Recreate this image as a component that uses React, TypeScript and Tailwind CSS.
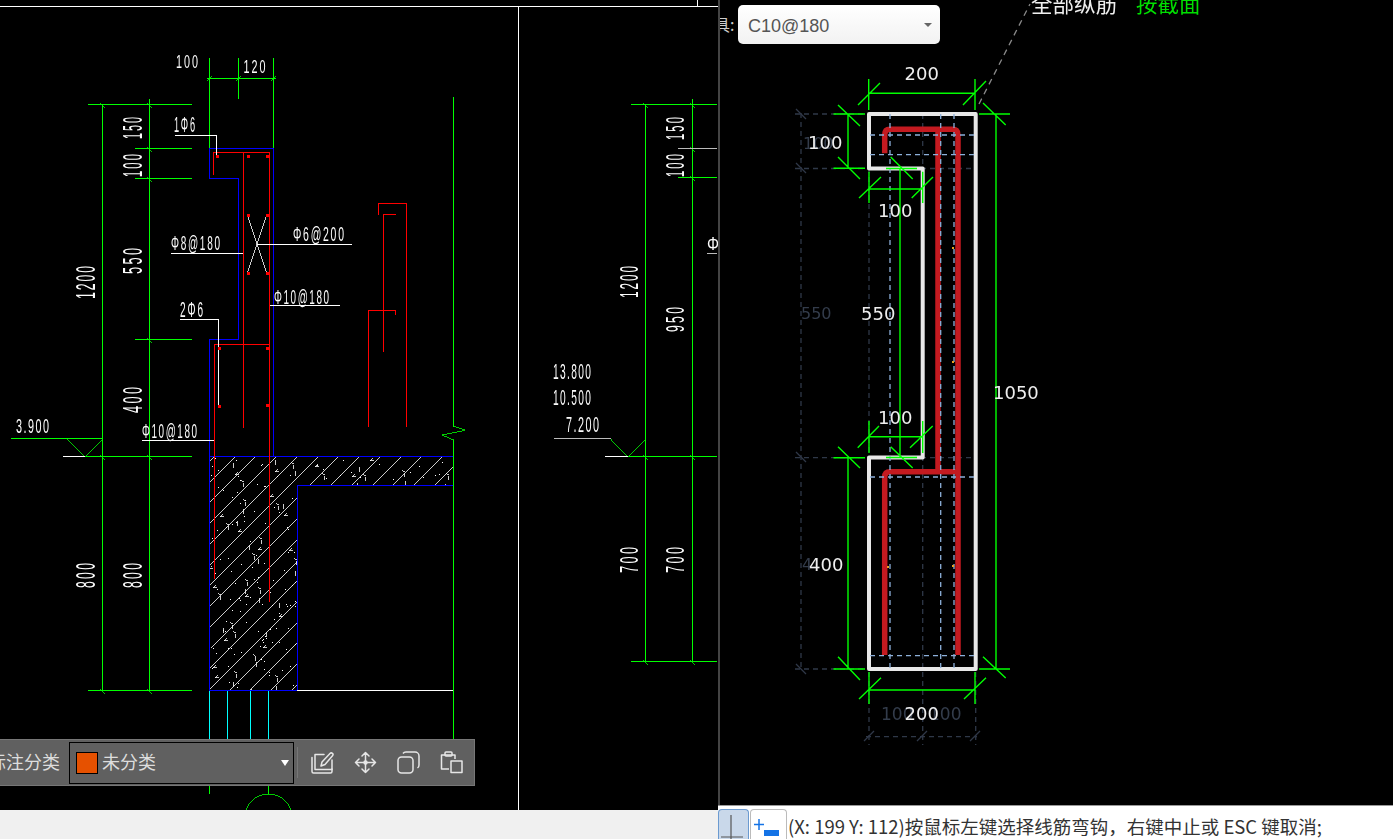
import React from "react";

type Pt = [number, number];
const G = "#00ff00";
const B = "#0000ff";
const R = "#ff0000";
const W = "#ffffff";
const C = "#00ffff";

function P({ d, c, w = 1 }: { d: string; c: string; w?: number }) {
  return <path d={d} stroke={c} strokeWidth={w} fill="none" />;
}

const adv: Record<string, number> = { "@": 1.015, "Φ": 0.76, ".": 0.278 };

function T({ x, y, w, h, r, children, fill = "#ffffff" }: { x: number; y: number; w: number; h: number; r?: boolean; children: string; fill?: string }) {
  const f = h / 0.7;
  const natural = children.split("").reduce((s, ch) => s + (adv[ch] ?? 0.556), 0) * f;
  const sx = (w / natural) * 0.82;
  return (
    <text
      x={0}
      y={0}
      fill={fill}
      opacity={0.99}
      fontFamily="'Liberation Sans', sans-serif"
      fontSize={f}
      textLength={w / sx}
      lengthAdjust="spacing"
      transform={`translate(${x} ${y}) ${r ? "rotate(-90) " : ""}scale(${sx} 1)`}
    >
      {children}
    </text>
  );
}

const hatchLines: number[] = [];
for (let k = -1; k < 15; k++) hatchLines.push(691.67 + k * 20.73);

const tickZ: Pt[] = [
  [130, 95], [140, 122], [150, 150], [255, 88], [262, 113], [300, 95], [315, 120], [380, 98], [392, 128], [508, 108], [492, 128], [515, 132], [500, 155], [545, 82], [632, 120], [645, 150], [680, 162], [765, 128], [765, 158], [245, 190], [255, 220], [278, 218], [287, 245], [155, 207], [160, 235], [97, 248], [105, 280], [140, 270], [150, 295], [205, 320], [178, 342], [210, 348], [183, 368], [205, 385], [304, 350], [310, 385], [315, 420], [62, 405], [162, 447], [165, 475], [172, 490], [202, 470], [208, 500], [75, 462], [82, 488], [266, 517], [272, 550], [118, 575], [100, 592], [108, 620], [125, 603], [228, 604], [225, 642], [187, 672], [197, 693], [80, 732], [128, 722], [130, 752], [182, 773], [252, 735], [258, 765], [75, 703],
];

const dots: Pt[] = [];
let seed = 12345;
for (let i = 0; i < 420 && dots.length < 130; i++) {
  seed = (seed * 1103515 + 12345) % 2147483647;
  const a = 211 + (seed % 241);
  seed = (seed * 1103515 + 12345) % 2147483647;
  const b = 458 + (seed % 231);
  if (b < 484 || a < 296) dots.push([a, b]);
}

const greenTicks: Pt[] = [
  [102.5, 104.5], [149.5, 104.5], [149.5, 148.5], [149.5, 178.5], [149.5, 339.5], [102.5, 456.5], [149.5, 456.5], [102.5, 690.5], [149.5, 690.5],
  [645.5, 104.5], [692.5, 104.5], [692.5, 148.5], [692.5, 177.5], [645.5, 456.5], [692.5, 456.5], [645.5, 661.5], [692.5, 661.5],
];
const redDots: Pt[] = [[217, 156], [247.5, 156], [266.5, 156], [218.5, 348], [266.5, 348], [218.5, 406], [266.5, 405], [247.5, 215], [266.5, 215], [247.5, 273], [266.5, 273]];

function LeftDrawing() {
  return (
    <svg width={718} height={810} viewBox="0 0 718 810" shapeRendering="crispEdges" className="block">
      <defs>
        <clipPath id="conc">
          <path d="M210 457H453V485H297V690H210Z" />
        </clipPath>
      </defs>
      <P d="M0 6.5H718M518.5 6V810M697.5 0V6" c={W} />
      <g clipPath="url(#conc)">
        {hatchLines.map((s) => (
          <line key={s} x1={s - 456} y1={456} x2={s - 700} y2={700} stroke={W} strokeWidth={0.8} />
        ))}
        {tickZ.map(([a, b], i) => {
          const x = Math.round(190 + a / 3) + 0.5;
          const y = Math.round(430 + b / 3) + 0.5;
          const d = i % 3 === 0 ? `M${x} ${y}v5` : i % 3 === 1 ? `M${x} ${y}l-3 3h4` : `M${x} ${y}l3 2v4`;
          return <P key={i} d={d} c={W} w={0.8} />;
        })}
        {dots.map(([a, b], i) => (
          <rect key={i} x={a} y={b} width={1} height={1} fill={W} />
        ))}
      </g>
      <P d="M209.5 58V148M238.5 58V99M273.5 58V148M207 78.5H276" c={G} />
      <P d="M207 81l5-5M236 81l5-5M271 81l5-5" c={G} w={0.8} />
      <P d="M88 104.5H192M102.5 104V690M149.5 99V690M135 148.5H192M135 178.5H192M135 339.5H192M85 456.5H192M88 690.5H192" c={G} />
      <P d="M11 438.5H102" c={G} />
      <P d="M67 438.5L85 456.5L102 438.5" c={G} w={0.8} />
      <P d="M63 456.5H85" c={W} />
      <P d="M453.5 97V426.5M453.5 440V739" c={G} />
      <P d="M453.5 426.5L465 430.5L442 435L453.5 440" c={G} w={0.8} />
      {greenTicks.map(([x, y]) => (
        <P key={`${x}-${y}`} d={`M${x - 2} ${y - 2}l5 5`} c={G} w={0.8} />
      ))}

      <P d="M273.5 148.5H209.5V178.5H238.5V339.5H209.5V690.5" c={B} />
      <P d="M273.5 148.5V456" c={B} />
      <P d="M209.5 456.5H453M209.5 690.5H297.5" c={B} />
      <P d="M297.5 690V485.5H453" c={B} />
      <P d="M297 690.5H453" c={W} />
      <P d="M209.5 691V739M227.5 691V739M250.5 691V739M268.5 691V739" c={C} />
      <P d="M209.5 786V794M268.5 786V794" c={G} />
      <circle cx={268.5} cy={818} r={24} stroke={G} strokeWidth={0.8} fill="none" />

      <P d="M213.5 175V152.5H269.5V602M243.5 152.5V428M214.5 579V344.5H269.5" c={R} />
      <P d="M378.5 215V203.5H406.5V427M383.5 352V214.5H396M368.5 427V310.5H395.5V315" c={R} />

      <P d="M175 135.5H216.5V156M180 319.5H218.5V406M171 253.5H243M257 244.5H352M270 305.5H340M142 440.5H214" c={W} />
      <P d="M247.5 215L266.5 273M266.5 215L247.5 273" c={W} w={0.8} />
      {redDots.map(([x, y]) => (
        <rect key={`${x}-${y}`} x={x - 1} y={y - 1} width={3} height={3} fill={R} />
      ))}

      <T x={176} y={68} w={22} h={12.5}>100</T>
      <T x={243.5} y={73} w={22} h={12.5}>120</T>
      <T x={174} y={132} w={21} h={15}>1Φ6</T>
      <T x={171} y={250} w={49} h={14}>Φ8@180</T>
      <T x={293} y={241} w={51} h={14}>Φ6@200</T>
      <T x={274} y={304} w={55} h={14}>Φ10@180</T>
      <T x={180} y={317} w={23} h={15}>2Φ6</T>
      <T x={142} y={438} w={55} h={14}>Φ10@180</T>
      <T x={16} y={433} w={33} h={14}>3.900</T>
      <T x={142} y={139} w={22} h={19} r>150</T>
      <T x={142} y={177} w={23} h={19} r>100</T>
      <T x={142} y={274} w={26} h={19} r>550</T>
      <T x={142} y={413} w={26} h={19} r>400</T>
      <T x={95} y={299} w={33} h={19} r>1200</T>
      <T x={95} y={588} w={25} h={19} r>800</T>
      <T x={142} y={588} w={25} h={19} r>800</T>

      <P d="M631 104.5H717M678 177.5H717M628 456.5H717M631 661.5H717M645.5 104V661M692.5 99V661" c={G} />
      <P d="M554 438.5H611M678 148.5H717M707 253.5H717" c="#bbbbbb" />
      <P d="M611 438.5L628 456L645 438.5" c={G} w={0.8} />
      <P d="M605 456.5H628" c={W} />
      <T x={684} y={140} w={23} h={18} r>150</T>
      <T x={684} y={177} w={23} h={18} r>100</T>
      <T x={684} y={332} w={25} h={18} r>950</T>
      <T x={638} y={298} w={32} h={18} r>1200</T>
      <T x={638} y={573} w={26} h={18} r>700</T>
      <T x={684} y={573} w={26} h={18} r>700</T>
      <T x={553} y={379} w={38} h={15}>13.800</T>
      <T x={553} y={405} w={38} h={15}>10.500</T>
      <T x={566} y={432} w={33} h={15}>7.200</T>
      <T x={707} y={250} w={14} h={13}>Φ</T>
    </svg>
  );
}

const dim = "#2f3848";
const blue = "#8db0da";

function D({ d, c }: { d: string; c: string }) {
  return <path d={d} stroke={c} strokeWidth={1.3} fill="none" strokeDasharray={c === dim || c === blue ? "5 4" : undefined} />;
}

function Num({ x, y, c = "#eeeeee", s = 18, children }: { x: number; y: number; c?: string; s?: number; children: string }) {
  return (
    <text x={x} y={y} fill={c} fontFamily="'DejaVu Sans', sans-serif" fontSize={s}>
      {children}
    </text>
  );
}

function RightDrawing() {
  return (
    <svg width={673} height={805} viewBox="720 0 673 805" className="block blur-[0.4px]">
      <Num x={881} y={720} c="#333c4b" s={17}>100</Num>
      <Num x={929} y={720} c="#333c4b" s={17}>100</Num>
      <Num x={801} y={319} c="#333c4b" s={16}>550</Num>
      <Num x={803} y={149} c="#333c4b" s={16}>100</Num>
      <Num x={802} y={570} c="#333c4b" s={16}>4</Num>

      <D c={dim} d="M801 113V669M795 114H865M795 168.5H975M795 457.7H975M795 669H865M869 168V457M869 672V745M922.7 114V745M975.7 672V745M866 736.7H977" />
      <path d="M796 109l10 10M796 163l10 10M796 452l10 10M796 664l10 10M864 741l10-10M917 741l10-10M970 741l10-10" stroke={dim} strokeWidth={1.3} />

      <path d="M869 114H975.7V669H869V457.4H922.7V168.4H869Z" fill="none" stroke="#e8e8e8" strokeWidth={4} strokeLinejoin="round" />

      <path d="M884.7 153.3V135Q884.7 129.3 890 129.3H952Q958 129.3 958 135V655" fill="none" stroke="#c41a20" strokeWidth={5.5} />
      <path d="M958 471.7H890Q884.7 471.7 884.7 477V655M938 129.3V471.7" fill="none" stroke="#c41a20" strokeWidth={5.5} />

      <D c={blue} d="M890 114V669M940.7 114V669M954 114V669M870 135H975M870 154.7H975M870 477H975M870 655.7H975" />

      <g stroke={G} strokeWidth={1.4} fill="none">
        <path d="M869 93.3H975M868.7 79V110M975 79V110M858 105L880 83M963 105L986 81" />
        <path d="M833.5 114H865M833.5 168.3H865M848 114V168M838 105L860 126M838 157L860 179" />
        <path d="M979 114H1010M996 114V669M983 103L1005.7 125M983 656.7L1005.7 678M979 669H1010" />
        <path d="M869 189H922.7M869 171.7V203M922.7 171.7V203M859 198L881 177M911.7 198L933 177" />
        <path d="M900 168V457M886 168.5H917M890.7 157L912.7 179M886 457.5H917M890.7 446.7L912.7 468" />
        <path d="M869 436.7H922.7M869 421V453M922.7 421V453M857.7 447.7L879 426M910 447.7L932.7 426" />
        <path d="M848 457.7V669M833.5 457.7H865M833.5 669H865M838 446.7L860 468M838 656.7L860 680" />
        <path d="M869 690H975M869 672V704M975 672V704M859 699L881 677.7M964 699L986 677.7" />
      </g>

      {[[888, 567], [953, 566], [953, 248], [953, 362]].map(([x, y]) => (
        <rect key={`${x}-${y}`} x={x - 1} y={y - 1} width={2} height={2} fill="#e8a020" />
      ))}

      <path d="M979 104L1030 4" stroke="#8a8a8a" strokeWidth={1.3} strokeDasharray="6 5" fill="none" />

      <Num x={904.5} y={80}>200</Num>
      <Num x={808} y={149}>100</Num>
      <Num x={878} y={217}>100</Num>
      <Num x={861} y={320}>550</Num>
      <Num x={993} y={399}>1050</Num>
      <Num x={878} y={424}>100</Num>
      <Num x={809} y={570.5}>400</Num>
      <Num x={904.5} y={720}>200</Num>

      <text x={1031} y={12} fill="#eeeeee" fontFamily="'Noto Sans CJK SC', sans-serif" fontSize={21.5}>全部纵筋</text>
      <text x={1136} y={12} fill="#00e000" fontFamily="'Noto Sans CJK SC', sans-serif" fontSize={21.5}>按截面</text>
    </svg>
  );
}

function EditIcon() {
  return (
    <svg width={23} height={23} viewBox="0 0 23 23" fill="none" stroke="#e6e6e6" strokeWidth={1.5} strokeLinejoin="round" strokeLinecap="round">
      <path d="M1 6.5V20.5a1.5 1.5 0 0 0 1.5 1.5h17a1.5 1.5 0 0 0 1.5-1.5V18" />
      <path d="M4 18.5V3.5H13M21 9V18.5H4" />
      <path d="M10 15l1-4L19 2.5a1.6 1.6 0 0 1 2.5 2.3L14 13.5z" />
    </svg>
  );
}
function MoveIcon() {
  return (
    <svg width={23} height={23} viewBox="0 0 23 23" fill="none" stroke="#e6e6e6" strokeWidth={1.5} strokeLinejoin="round" strokeLinecap="round">
      <path d="M11.5 1.5V21.5M1.5 11.5H21.5M8 5l3.5-3.5L15 5M8 18l3.5 3.5L15 18M5 8l-3.5 3.5L5 15M18 8l3.5 3.5L18 15" />
      <circle cx={11.5} cy={11.5} r={1.5} fill="#e6e6e6" />
    </svg>
  );
}
function CopyIcon() {
  return (
    <svg width={23} height={23} viewBox="0 0 23 23" fill="none" stroke="#e6e6e6" strokeWidth={1.5} strokeLinejoin="round">
      <rect x={1} y={6} width={15} height={16} rx={3.5} />
      <path d="M6 2.5Q7 1 9 1h9a4 4 0 0 1 4 4v9q0 2-1.5 3" />
    </svg>
  );
}
function PasteIcon() {
  return (
    <svg width={23} height={23} viewBox="0 0 23 23" fill="none" stroke="#e6e6e6" strokeWidth={1.5} strokeLinejoin="round">
      <path d="M9 18H1.5V4H15V8" />
      <rect x={5} y={1} width={7} height={4} rx={1} />
      <rect x={11} y={10} width={11} height={11.5} />
    </svg>
  );
}

export default function App() {
  return (
    <div className="flex h-[839px] w-[1393px] overflow-hidden bg-black">
      <div className="flex w-[718px] flex-col">
        <div className="relative h-[810px] overflow-hidden bg-black">
          <LeftDrawing />
          <div className="absolute left-[-1px] top-[739px] flex h-[47px] w-[476px] items-center border border-[#777777] bg-[#606060]">
            <span className="ml-[-12px] w-[81px] shrink-0 whitespace-nowrap pb-[3px] font-['Noto_Sans_CJK_SC',sans-serif] text-[18px] leading-none text-[#dddddd]">标注分类</span>
            <div className="flex h-[42px] w-[225px] shrink-0 items-center border border-black pl-[6px] pr-[4px]">
              <span className="h-[22px] w-[22px] border border-black bg-[#e65100]" />
              <span className="ml-[4px] pb-[3px] font-['Noto_Sans_CJK_SC',sans-serif] text-[18px] leading-none text-[#dddddd]">未分类</span>
              <span className="ml-auto h-0 w-0 border-x-[4.5px] border-t-[6px] border-x-transparent border-t-white" />
            </div>
            <span className="ml-[3px] h-[31px] w-px bg-[#777777]" />
            <div className="ml-[13px] flex gap-[20px]">
              <EditIcon />
              <MoveIcon />
              <CopyIcon />
              <PasteIcon />
            </div>
          </div>
        </div>
        <div className="h-[29px] bg-[#f0f0f0]" />
      </div>

      <div className="flex w-[675px] flex-col">
        <div className="relative h-[805px] overflow-hidden border-l-2 border-[#444444] bg-black">
          <RightDrawing />
          <div className="absolute left-0 top-[5px] flex w-[220px] items-center justify-end">
            <span className="absolute left-[-6px] whitespace-nowrap font-['Noto_Sans_CJK_SC',sans-serif] text-[16px] leading-[39px] text-[#cccccc]">具:</span>
            <div className="flex h-[39px] w-[202px] items-center justify-between rounded-[5px] bg-gradient-to-b from-white to-[#f2f2f2] pl-[10px] pr-[8px]">
              <span className="pt-[3px] font-['Liberation_Sans',sans-serif] text-[18px] text-[#555555]">C10@180</span>
              <span className="h-0 w-0 border-x-[4.5px] border-t-[4.5px] border-x-transparent border-t-[#666666]" />
            </div>
          </div>
        </div>
        <div className="flex h-[34px] items-end overflow-hidden border-t border-[#999999] bg-white">
          <div className="relative h-[30px] w-[31px] shrink-0 rounded-t-[4px] border border-b-0 border-[#6b9ad0] bg-[#c9d8ea]">
            <svg width={30} height={30} viewBox="0 0 30 30" className="block">
              <path d="M12 5V30M2 27H24" stroke="#555555" strokeWidth={1.2} fill="none" />
            </svg>
          </div>
          <div className="ml-[1px] h-[30px] w-[37px] shrink-0 rounded-t-[4px] border border-b-0 border-[#bbbbbb] bg-white">
            <svg width={35} height={29} viewBox="0 0 35 29" className="block">
              <path d="M8 9V20M3 14.5H13" stroke="#1473e6" strokeWidth={1.5} fill="none" />
              <rect x={13} y={20} width={15} height={6} fill="#1473e6" />
            </svg>
          </div>
          <span className="ml-[1px] self-center whitespace-nowrap pt-[8px] font-['Noto_Sans_CJK_SC',sans-serif] text-[18.5px] leading-none text-[#333333]">(X: 199 Y: 112)按鼠标左键选择线筋弯钩，右键中止或 ESC 键取消;</span>
        </div>
      </div>
    </div>
  );
}
